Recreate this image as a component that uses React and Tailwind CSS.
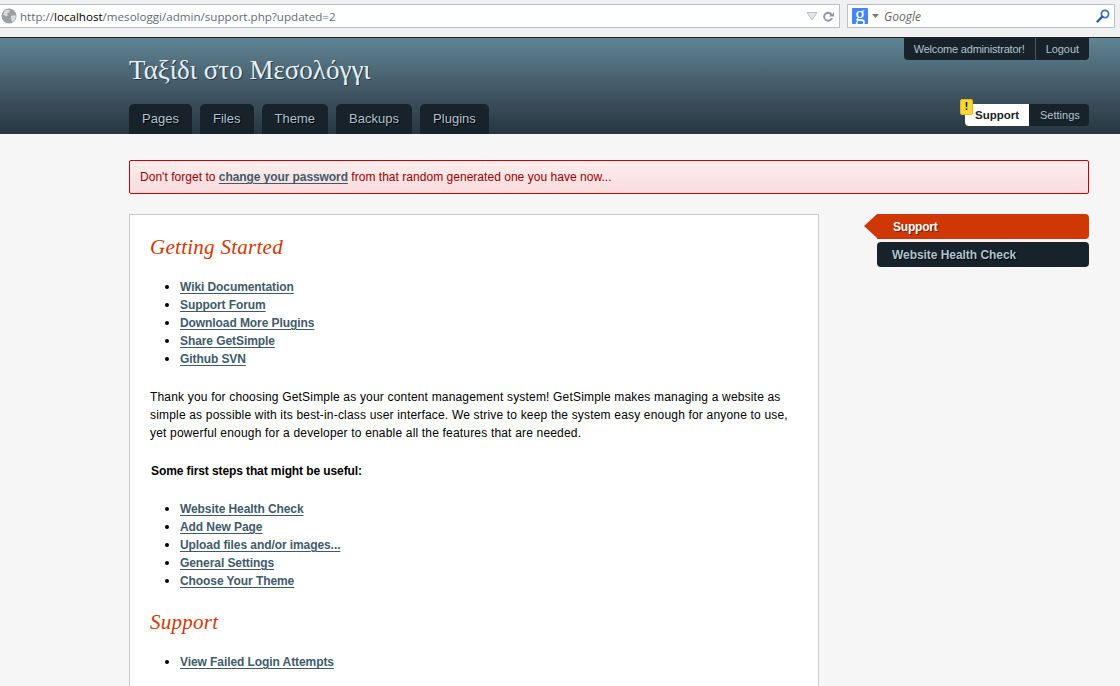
const sans = { fontFamily: '"Liberation Sans", Arial, sans-serif' };
const serif = { fontFamily: '"Liberation Serif", serif' };

function L({ children }) {
  return <a className="font-bold underline text-[#415a6a] decoration-[#415a6a] underline-offset-[1.5px] tracking-[-0.08px]">{children}</a>;
}

function LinkList({ items }) {
  return (
    <ul className="list-disc pl-[30px] ml-0 [&>li]:h-[18px] [&>li]:leading-[16px]">
      {items.map((t) => (
        <li key={t} className="marker:text-black marker:text-[14px]"><L>{t}</L></li>
      ))}
    </ul>
  );
}

function Tab({ children }) {
  return (
    <div className="h-[30px] px-[13px] bg-[#18222a] rounded-t-[5px] text-[13px] leading-[30px] text-[#aec3d0] [text-shadow:1px_1px_0_#000] tracking-[0.02px]">
      {children}
    </div>
  );
}

export default function App() {
  return (
    <div className="w-[1120px] h-[686px] overflow-hidden bg-[#f6f6f6] text-[12px] text-black" style={sans}>
      {/* browser chrome */}
      <div className="h-[37px] bg-[#f0f0f0] flex gap-[7px] pt-[4px] pb-[9px] pr-[5px]">
        <div className="flex-1 h-[24px] bg-white border-y border-r border-[#b8c0c8] flex items-center pr-[4px]">
          <svg width="17" height="17" viewBox="0 0 17 17" className="ml-[1px] shrink-0">
            <circle cx="8" cy="8" r="7.500" fill="#9a9fa3" />
            <path d="M4 2.500c2-1 4-1 5 0l-1 2-2 1 1 2-2 1-3-2zM10 8l4-1 1 2-2 4-2 1-1-3z" fill="#d8dadc" />
          </svg>
          <span className="ml-[2px] text-[#5e6c78] pt-[1px]" style={{ fontFamily: '"Open Sans", sans-serif', fontSize: 11.6 }}>
            http://<span className="text-black">localhost</span>/mesologgi/admin/support.php?updated=2
          </span>
          <div className="flex-1" />
          <svg width="12" height="10" viewBox="0 0 12 10" className="mr-[4px]">
            <path d="M1 1.500h10L6 9z" fill="#e4e7ea" stroke="#b9c0c6" />
          </svg>
          <svg width="13" height="13" viewBox="0 0 13 13">
            <path d="M10.500 4.200A5 5 0 1 0 11 8H8.800a3 3 0 1 1-.4-3L7 6.500h5V1.500z" fill="#8d9aa5" />
          </svg>
        </div>
        <div className="w-[268px] h-[24px] bg-white border border-[#b8c0c8] flex items-center pl-[4px] pr-[4px]">
          <div className="w-[16px] h-[16px] bg-[#4285f4] rounded-[1px] text-white text-center text-[20px] leading-[13px]" style={serif}>g</div>
          <svg width="7" height="4" viewBox="0 0 7 4" className="ml-[4px]"><path d="M0 0h7L3.500 4z" fill="#777" /></svg>
          <span className="ml-[5px] pt-[2px] italic text-[12px] text-[#666]" style={{ fontFamily: '"Open Sans", sans-serif' }}>Google</span>
          <div className="flex-1" />
          <svg width="14" height="14" viewBox="0 0 14 14">
            <circle cx="9" cy="5" r="3.600" fill="none" stroke="#3b77b5" strokeWidth="1.800" />
            <path d="M6.300 7.700 1.500 12.500" stroke="#2a5f99" strokeWidth="2.400" strokeLinecap="round" />
          </svg>
        </div>
      </div>

      {/* header */}
      <header className="h-[97px] border-t border-[#222] bg-gradient-to-b from-[#618495] to-[#283640] pl-[129px] pr-[31px] flex justify-between">
        <div className="flex flex-col justify-between">
          <div className="pt-[16px] text-[27px] leading-[32px] text-[#e8f0f4] [text-shadow:1px_1px_0_#2a3a44]" style={serif}>
            Ταξίδι στο Μεσολόγγι
          </div>
          <nav className="flex gap-[8px]">
            <Tab>Pages</Tab>
            <Tab>Files</Tab>
            <Tab>Theme</Tab>
            <Tab>Backups</Tab>
            <Tab>Plugins</Tab>
          </nav>
        </div>
        <div className="flex flex-col justify-between items-end pb-[8px]">
          <div className="flex h-[22px] bg-[#18222a] rounded-b-[4px] text-[11px] leading-[22px] text-[#aec3d0] tracking-[-0.2px]">
            <span className="px-[10px] border-r border-[#4a5a64]">Welcome administrator!</span>
            <span className="px-[10px] tracking-[-0.05px]">Logout</span>
          </div>
          <div className="relative flex h-[22px] text-[11px] leading-[22px]">
            <div className="absolute left-[-5px] top-[-5px] w-[13px] h-[16px] rounded-[2px] bg-[#fdd835] border border-[#e8b820] text-black text-[10px] font-bold leading-[14px] text-center">!</div>
            <span className="w-[64px] pl-[10px] bg-white rounded-bl-[4px] font-bold text-[#222] text-[11.500px]">Support</span>
            <span className="w-[60px] pl-[11px] bg-[#18222a] rounded-r-[4px] text-[#aec3d0]">Settings</span>
          </div>
        </div>
      </header>

      {/* body */}
      <main className="pl-[129px] pr-[31px] pt-[26px]">
        <div className="h-[34px] rounded-[2px] border border-[#cc0000] bg-gradient-to-b from-[#fdeeee] to-[#f8dcdc] px-[10px] leading-[32px] text-[#990000] tracking-[0.03px]">
          Don't forget to <L>change your password</L> from that random generated one you have now...
        </div>
        <div className="flex justify-between mt-[20px]">
          <section className="w-[690px] h-[600px] bg-white border border-[#c8c8c8] px-[20px] pt-[19px]">
            <h3 className="text-[21px] leading-[26px] italic text-[#cf3805] tracking-[0.27px]" style={serif}>Getting Started</h3>
            <div className="mt-[18px]">
              <LinkList items={["Wiki Documentation", "Support Forum", "Download More Plugins", "Share GetSimple", "Github SVN"]} />
            </div>
            <p className="mt-[20px] leading-[18px] tracking-[0.18px]">
              Thank you for choosing GetSimple as your content management system! GetSimple makes managing a website as simple as possible with its best-in-class user interface. We strive to keep the system easy enough for anyone to use, yet powerful enough for a developer to enable all the features that are needed.
            </p>
            <p className="mt-[20px] ml-px leading-[18px] font-bold tracking-[-0.1px]">Some first steps that might be useful:</p>
            <div className="mt-[20px]">
              <LinkList items={["Website Health Check", "Add New Page", "Upload files and/or images...", "General Settings", "Choose Your Theme"]} />
            </div>
            <h3 className="mt-[19px] text-[21px] leading-[26px] italic text-[#cf3805] tracking-[0.27px]" style={serif}>Support</h3>
            <div className="mt-[18px]">
              <LinkList items={["View Failed Login Attempts"]} />
            </div>
          </section>
          <aside className="w-[225px] flex flex-col items-end gap-[3px] font-bold">
            <div className="relative w-[212px] h-[25px] bg-[#cf3805] rounded-r-[4px] pl-[16px] leading-[26px] text-white [text-shadow:1px_1px_0_#7a2000] tracking-[-0.2px]">
              <span className="absolute left-[-13px] top-0 w-0 h-0 border-y-[12.500px] border-y-transparent border-r-[13px] border-r-[#cf3805]" />
              Support
            </div>
            <div className="w-[212px] h-[25px] bg-[#18222a] rounded-[4px] pl-[15px] leading-[27px] text-[#aec3d0] [text-shadow:1px_1px_0_#000] tracking-[-0.05px]">
              Website Health Check
            </div>
          </aside>
        </div>
      </main>
    </div>
  );
}
